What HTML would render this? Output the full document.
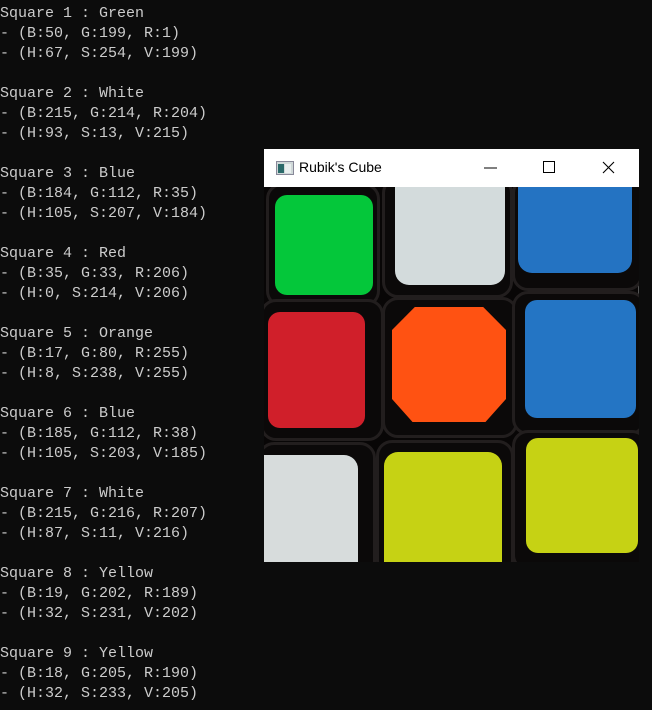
<!DOCTYPE html>
<html><head><meta charset="utf-8"><style>
html,body{margin:0;padding:0;background:#0c0c0c;width:652px;height:710px;overflow:hidden}
pre{margin:0;position:absolute;left:0;top:4px;font-family:"Liberation Mono",monospace;font-size:15px;line-height:20px;color:#cccccc}
.win{position:absolute;left:264px;top:149px;width:375px;height:413px;background:#fff}
.title{position:absolute;left:0;top:0;width:375px;height:38px;background:#fff;font-family:"Liberation Sans",sans-serif;font-size:14px;color:#000}
.img{position:absolute;left:0;top:38px;width:375px;height:375px;background:#080606;overflow:hidden;box-shadow:inset -1px 0 0 #555}
.c{position:absolute;border:3px solid #221e1e;border-radius:16px;background:#0b0909}
.s{position:absolute;border-radius:12px}
</style></head><body>
<pre>Square 1 : Green
- (B:50, G:199, R:1)
- (H:67, S:254, V:199)

Square 2 : White
- (B:215, G:214, R:204)
- (H:93, S:13, V:215)

Square 3 : Blue
- (B:184, G:112, R:35)
- (H:105, S:207, V:184)

Square 4 : Red
- (B:35, G:33, R:206)
- (H:0, S:214, V:206)

Square 5 : Orange
- (B:17, G:80, R:255)
- (H:8, S:238, V:255)

Square 6 : Blue
- (B:185, G:112, R:38)
- (H:105, S:203, V:185)

Square 7 : White
- (B:215, G:216, R:207)
- (H:87, S:11, V:216)

Square 8 : Yellow
- (B:19, G:202, R:189)
- (H:32, S:231, V:202)

Square 9 : Yellow
- (B:18, G:205, R:190)
- (H:32, S:233, V:205)</pre>
<div class="win">
 <div class="title">
  <svg style="position:absolute;left:12px;top:12px" width="18" height="14"><rect x="0.5" y="0.5" width="17" height="13" fill="#cfd8d8" stroke="#889"/><rect x="2" y="3" width="6" height="9" fill="#2b6a6a"/><rect x="9" y="3" width="6" height="9" fill="#e8eeee"/></svg>
  <span style="position:absolute;left:35px;top:10px">Rubik's Cube</span>
  <svg style="position:absolute;left:220px;top:12px" width="14" height="14"><line x1="0" y1="7" x2="13" y2="7" stroke="#000" stroke-width="1"/></svg>
  <svg style="position:absolute;left:279px;top:12px" width="14" height="14"><rect x="0.5" y="0.5" width="11" height="11" fill="none" stroke="#000"/></svg>
  <svg style="position:absolute;left:338px;top:12px" width="14" height="14"><path d="M1 1L12 12M12 1L1 12" stroke="#000" stroke-width="1.1"/></svg>
 </div>
 <div class="img">
  <div class="c" style="left:2px;top:-4px;width:108px;height:118px"></div>
  <div class="c" style="left:118px;top:-10px;width:125px;height:115px"></div>
  <div class="c" style="left:248px;top:-10px;width:125px;height:108px"></div>
  <div class="c" style="left:-4px;top:112px;width:118px;height:136px"></div>
  <div class="c" style="left:118px;top:110px;width:130px;height:135px"></div>
  <div class="c" style="left:248px;top:104px;width:128px;height:138px"></div>
  <div class="c" style="left:-6px;top:255px;width:112px;height:130px"></div>
  <div class="c" style="left:112px;top:253px;width:132px;height:130px"></div>
  <div class="c" style="left:248px;top:243px;width:130px;height:135px"></div>
  <div class="s" style="left:11px;top:8px;width:98px;height:100px;background:#04c73a"></div>
  <div class="s" style="left:131px;top:0px;width:110px;height:98px;background:#d3dbdc;border-radius:0 0 14px 14px"></div>
  <div class="s" style="left:254px;top:0px;width:114px;height:86px;background:#2473c2;border-radius:0 0 14px 14px"></div>
  <div class="s" style="left:4px;top:125px;width:97px;height:116px;background:#d01f2a"></div>
  <div style="position:absolute;left:128px;top:120px;width:114px;height:115px;background:#ff5212;clip-path:polygon(20% 0,80% 0,100% 20%,100% 80%,82% 100%,18% 100%,0 80%,0 20%)"></div>
  <div class="s" style="left:261px;top:113px;width:111px;height:118px;background:#2475c4"></div>
  <div class="s" style="left:0px;top:268px;width:94px;height:120px;background:#d7dcdc;border-radius:0 14px 0 0"></div>
  <div class="s" style="left:120px;top:265px;width:118px;height:120px;background:#c6d214;border-radius:14px 14px 0 0"></div>
  <div class="s" style="left:262px;top:251px;width:112px;height:115px;background:#c6d214"></div>
 </div>
</div>
</body></html>
